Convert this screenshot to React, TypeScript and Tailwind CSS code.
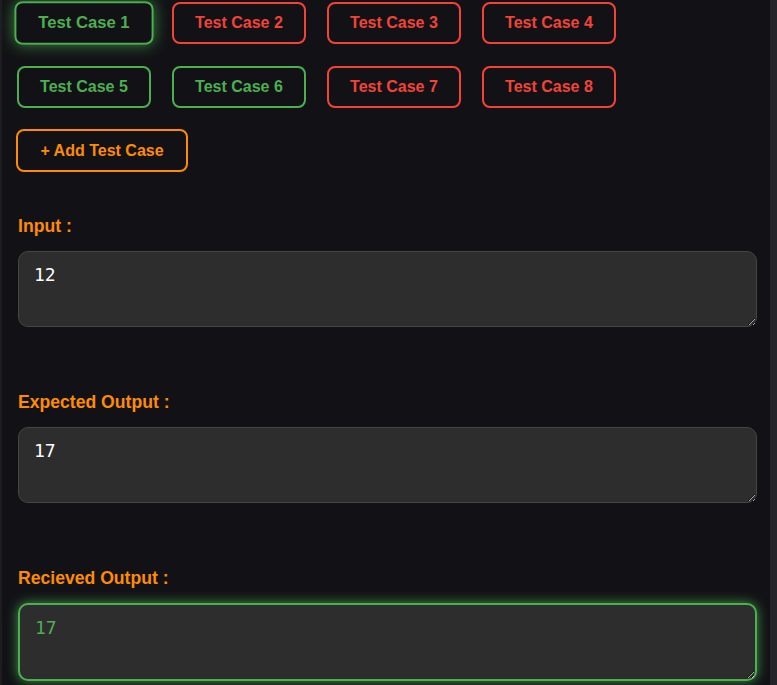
import React from "react";

type TestCase = { id: number; passed: boolean };

const testCases: TestCase[] = [
  { id: 1, passed: true },
  { id: 2, passed: false },
  { id: 3, passed: false },
  { id: 4, passed: false },
  { id: 5, passed: true },
  { id: 6, passed: true },
  { id: 7, passed: false },
  { id: 8, passed: false },
];

const Field: React.FC<{ label: string; value: string; success?: boolean }> = ({
  label,
  value,
  success,
}) => (
  <div className="flex flex-col">
    <label className="text-[17.6px] leading-[20px] font-bold text-[#ff8c00] pl-[1px]">
      {label}
    </label>
    <textarea
      readOnly
      value={value}
      className={`ml-[1px] w-[739px] rounded-[10px] bg-[#2d2d2d] px-[15px] pt-[12px] text-[18px] leading-[22px] outline-none [color-scheme:dark] [font-family:'DejaVu_Sans_Mono',monospace] ${
        success
          ? "mt-[15px] h-[78px] border-2 border-[#4caf50] text-[#4caf50] shadow-[0_0_12px_rgba(76,175,80,0.85)]"
          : "mt-[15px] h-[76px] border border-[#454545] text-white"
      }`}
    />
  </div>
);

export default function App() {
  return (
    <div className="flex h-[685px] w-[777px] overflow-hidden bg-[#121216] [font-family:'Liberation_Sans',Arial,sans-serif]">
      <div className="w-[2px] shrink-0 bg-[#1d1d20]" />
      <div className="flex-1 pl-[15px] pt-[2px]">
        {/* Test case tabs */}
        <div className="flex w-[620px] flex-wrap gap-x-[21px] gap-y-[22px]">
          {testCases.map((tc) => (
            <button
              key={tc.id}
              className={`h-[42px] w-[134px] rounded-lg border-2 bg-transparent text-[16px] font-bold ${
                tc.passed
                  ? "border-[#4caf50] text-[#4caf50]"
                  : "border-[#f44336] text-[#f44336]"
              } ${
                tc.id === 1
                  ? "scale-[1.04] shadow-[0_0_14px_rgba(76,175,80,0.75)]"
                  : ""
              }`}
            >
              Test Case {tc.id}
            </button>
          ))}
        </div>

        <button className="mt-[21px] h-[43px] w-[172px] -ml-[1px] rounded-lg border-2 border-[#ff8c00] bg-transparent text-[16px] font-bold text-[#ff8c00]">
          + Add Test Case
        </button>

        <div className="mt-[44px] flex flex-col gap-[65px]">
          <Field label="Input :" value="12" />
          <Field label="Expected Output :" value="17" />
          <Field label="Recieved Output :" value="17" success />
        </div>
      </div>
      <div className="w-[7px] shrink-0 bg-[#26262a]" />
    </div>
  );
}
